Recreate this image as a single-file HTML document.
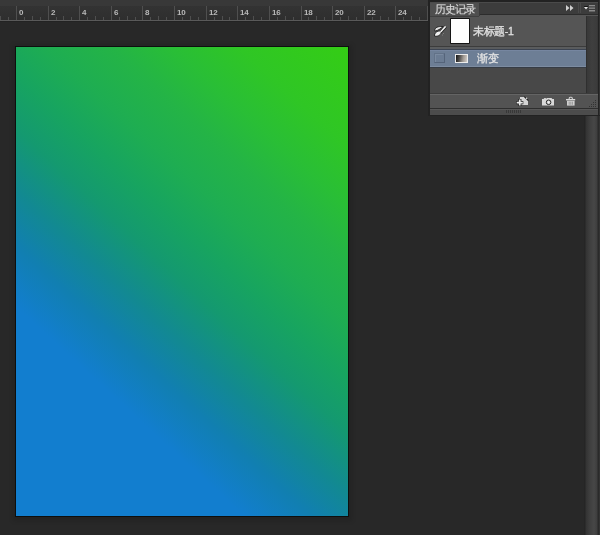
<!DOCTYPE html>
<html><head><meta charset="utf-8">
<style>
*{margin:0;padding:0;box-sizing:border-box}
html,body{width:600px;height:535px;overflow:hidden;background:#282828;font-family:"Liberation Sans",sans-serif}
div,svg{position:absolute}
.r{position:absolute}
.rl{top:9px;font-size:8px;line-height:8px;color:#b9b9b9;font-weight:bold;letter-spacing:-.2px;will-change:transform}
.t{color:#e2e2e2;font-size:10.5px;line-height:12px;white-space:nowrap;letter-spacing:-.4px;will-change:transform;-webkit-text-stroke:.3px #e2e2e2}
</style></head><body>
<!-- top band + ruler -->
<div style="left:0;top:0;width:429px;height:6px;background:#383838"></div>
<div style="left:0;top:6px;width:428px;height:14px;background:linear-gradient(#333,#2e2e2e)"></div>
<div style="left:0;top:20px;width:428px;height:1px;background:#5a5a5a"></div>
<div style="left:0;top:21px;width:428px;height:1px;background:#232323"></div>
<svg style="left:0;top:0" width="430" height="22"><g fill="#4f4f4f">
<rect x="0" y="16" width="1" height="4"/>
<rect x="8" y="17" width="1" height="3"/>
<rect x="16" y="6" width="1" height="14"/>
<rect x="24" y="17" width="1" height="3"/>
<rect x="32" y="16" width="1" height="4"/>
<rect x="40" y="17" width="1" height="3"/>
<rect x="48" y="6" width="1" height="14"/>
<rect x="56" y="17" width="1" height="3"/>
<rect x="63" y="16" width="1" height="4"/>
<rect x="71" y="17" width="1" height="3"/>
<rect x="79" y="6" width="1" height="14"/>
<rect x="87" y="17" width="1" height="3"/>
<rect x="95" y="16" width="1" height="4"/>
<rect x="103" y="17" width="1" height="3"/>
<rect x="111" y="6" width="1" height="14"/>
<rect x="119" y="17" width="1" height="3"/>
<rect x="127" y="16" width="1" height="4"/>
<rect x="135" y="17" width="1" height="3"/>
<rect x="142" y="6" width="1" height="14"/>
<rect x="150" y="17" width="1" height="3"/>
<rect x="158" y="16" width="1" height="4"/>
<rect x="166" y="17" width="1" height="3"/>
<rect x="174" y="6" width="1" height="14"/>
<rect x="182" y="17" width="1" height="3"/>
<rect x="190" y="16" width="1" height="4"/>
<rect x="198" y="17" width="1" height="3"/>
<rect x="206" y="6" width="1" height="14"/>
<rect x="214" y="17" width="1" height="3"/>
<rect x="222" y="16" width="1" height="4"/>
<rect x="229" y="17" width="1" height="3"/>
<rect x="237" y="6" width="1" height="14"/>
<rect x="245" y="17" width="1" height="3"/>
<rect x="253" y="16" width="1" height="4"/>
<rect x="261" y="17" width="1" height="3"/>
<rect x="269" y="6" width="1" height="14"/>
<rect x="277" y="17" width="1" height="3"/>
<rect x="285" y="16" width="1" height="4"/>
<rect x="293" y="17" width="1" height="3"/>
<rect x="301" y="6" width="1" height="14"/>
<rect x="308" y="17" width="1" height="3"/>
<rect x="316" y="16" width="1" height="4"/>
<rect x="324" y="17" width="1" height="3"/>
<rect x="332" y="6" width="1" height="14"/>
<rect x="340" y="17" width="1" height="3"/>
<rect x="348" y="16" width="1" height="4"/>
<rect x="356" y="17" width="1" height="3"/>
<rect x="364" y="6" width="1" height="14"/>
<rect x="372" y="17" width="1" height="3"/>
<rect x="380" y="16" width="1" height="4"/>
<rect x="388" y="17" width="1" height="3"/>
<rect x="395" y="6" width="1" height="14"/>
<rect x="403" y="17" width="1" height="3"/>
<rect x="411" y="16" width="1" height="4"/>
<rect x="419" y="17" width="1" height="3"/>
<rect x="427" y="6" width="1" height="14"/>
</g></svg>
<div class="rl" style="left:19px">0</div>
<div class="rl" style="left:51px">2</div>
<div class="rl" style="left:82px">4</div>
<div class="rl" style="left:114px">6</div>
<div class="rl" style="left:145px">8</div>
<div class="rl" style="left:177px">10</div>
<div class="rl" style="left:209px">12</div>
<div class="rl" style="left:240px">14</div>
<div class="rl" style="left:272px">16</div>
<div class="rl" style="left:304px">18</div>
<div class="rl" style="left:335px">20</div>
<div class="rl" style="left:367px">22</div>
<div class="rl" style="left:398px">24</div>
<div class="rl" style="left:430px">26</div>
<!-- canvas -->
<div style="left:13px;top:45px;width:339px;height:476px;background:rgba(0,0,0,.12);filter:blur(2px)"></div>
<div style="left:15px;top:46px;width:334px;height:471px;background:#0d0f0e"></div>
<div style="left:16px;top:47px;width:332px;height:469px;background:linear-gradient(42.5deg, #127ecf 0%, #127ecf 27%, #117fb1 35%, #128992 42%, #149970 50%, #17a460 57%, #1ead52 64%, #24b446 72%, #29be36 79%, #2fc625 87%, #34cd15 100%)"></div>
<!-- right strip -->
<div style="left:584px;top:115px;width:16px;height:420px;background:linear-gradient(90deg,#252525 0,#252525 1px,#333 2px,#3f3f3f 6px,#474747 10px,#3e3e3e 13px,#2a2a2a 14px,#2a2a2a 15px,#333 15px)"></div>
<!-- panel -->
<div style="left:428px;top:0;width:172px;height:116px;background:#222"></div>
<div style="left:430px;top:2px;width:168px;height:1px;background:#4a4a4a"></div>
<div style="left:430px;top:3px;width:49px;height:13px;background:#4f4f4f"></div>
<div style="left:479px;top:3px;width:1px;height:13px;background:#3a3a3a"></div>
<div style="left:480px;top:3px;width:118px;height:11px;background:#3c3c3c"></div>
<div style="left:480px;top:14px;width:118px;height:1px;background:#2c2c2c"></div>
<div style="left:480px;top:15px;width:118px;height:1px;background:#555"></div>
<div class="t" style="left:435px;top:3px;color:#dadada;letter-spacing:-.9px;-webkit-text-stroke:.15px #dadada">历史记录</div>
<!-- header icons -->
<svg style="left:560px;top:0" width="40" height="16">
 <path d="M6 5 L9.5 8 L6 11 Z M10 5 L13.5 8 L10 11 Z" fill="#cfcfcf"/>
 <rect x="18" y="3" width="1" height="10" fill="#4a4a4a"/><rect x="20" y="3" width="1" height="10" fill="#4a4a4a"/>
 <rect x="24" y="6" width="4" height="1" fill="#151515"/>
 <path d="M24 7 L28 7 L26 9.5 Z" fill="#e6e6e6"/>
 <rect x="29" y="5" width="6" height="1.3" fill="#8a8a8a"/><rect x="29" y="7.5" width="6" height="1.3" fill="#8a8a8a"/><rect x="29" y="10" width="6" height="1.5" fill="#8a8a8a"/>
</svg>
<!-- row 1 -->
<div style="left:430px;top:16px;width:156px;height:30px;background:#555"></div>
<div style="left:430px;top:16px;width:49px;height:1px;background:#404040"></div>
<svg style="left:432px;top:24px" width="16" height="14">
 <path d="M13.6 2.4 L8.6 8" stroke="#1a1a1a" stroke-width="3" fill="none"/>
 <path d="M2.6 12.2 C2 8.8 5 6.8 9.6 6.8 C9.4 10.6 6.4 12.8 2.6 12.2 Z" fill="#efefef" stroke="#181818" stroke-width=".9"/>
 <path d="M13.6 2.4 L8.8 7.8" stroke="#f0f0f0" stroke-width="1.6" fill="none"/>
 <path d="M2.8 7.2 C2.2 4.2 5 2.6 8.6 2.5 L11 2.7 C9.6 3.8 7.2 6.2 2.8 7.2 Z" fill="#e4e4e4" stroke="#181818" stroke-width=".9"/>
 <circle cx="11.5" cy="9.5" r=".5" fill="#888"/><circle cx="10.5" cy="11" r=".5" fill="#888"/>
</svg>
<div style="left:450px;top:18px;width:20px;height:26px;background:#141414;border-radius:1px"></div>
<div style="left:451px;top:19px;width:18px;height:24px;background:#fdfdfd"></div>
<div class="t" style="left:473px;top:25px">未标题-1</div>
<div style="left:430px;top:46px;width:156px;height:1px;background:#3c3c3c"></div>
<div style="left:430px;top:47px;width:156px;height:2px;background:#5a5c5e"></div>
<div style="left:430px;top:49px;width:156px;height:1px;background:#3c4452"></div>
<!-- row 2 -->
<div style="left:430px;top:50px;width:156px;height:17px;background:#6d7e95;border-top:1px solid #7686a0;border-bottom:1px solid #7d8ca1"></div>
<div style="left:434px;top:53px;width:11px;height:10px;background:#6b7c93;border-top:1px solid #627288;border-left:1px solid #627288;border-right:1px solid #55647a;border-bottom:1px solid #55647a"></div>
<div style="left:435px;top:54px;width:8px;height:8px;border-top:1px solid #7a8aa0;border-left:1px solid #7a8aa0"></div>
<div style="left:455px;top:54px;width:13px;height:9px;background:#ececec"></div>
<div style="left:456px;top:55px;width:11px;height:7px;background:linear-gradient(100deg,#141414 0%,#4a4846 30%,#a09a94 65%,#d4cec8 100%)"></div>
<div class="t" style="left:477px;top:52px">渐变</div>
<div style="left:430px;top:67px;width:156px;height:1px;background:#363c45"></div>
<div style="left:430px;top:68px;width:156px;height:25px;background:#484848"></div>
<!-- scrollbar -->
<div style="left:586px;top:16px;width:12px;height:77px;background:linear-gradient(90deg,#2f2f2f 0,#2f2f2f 1px,#383838 1px,#3f3f3f 6px,#3b3b3b 11px,#333 12px)"></div>
<div style="left:599px;top:0;width:1px;height:115px;background:#333"></div>
<!-- footer -->
<div style="left:430px;top:93px;width:168px;height:1px;background:#3c3c3c"></div>
<div style="left:430px;top:94px;width:168px;height:1px;background:#646464"></div>
<div style="left:430px;top:95px;width:168px;height:13px;background:#535353"></div>
<div style="left:430px;top:108px;width:168px;height:1px;background:#2e2e2e"></div>
<div style="left:430px;top:109px;width:168px;height:1px;background:#575757"></div>
<div style="left:430px;top:110px;width:168px;height:5px;background:#4c4c4c"></div>
<div style="left:506px;top:110px;width:16px;height:3px;background:repeating-linear-gradient(90deg,#383838 0 1px,#4c4c4c 1px 2px)"></div>
<svg style="left:514px;top:94px" width="66" height="14">
 <!-- new doc -->
 <path d="M6 3 H10.5 L14 6.5 V11 H6 Z" fill="#d4d4d4"/>
 <path d="M10.3 2.6 L14.4 6.7" stroke="#1e1e1e" stroke-width="1.1"/>
 <circle cx="12.6" cy="4.3" r=".75" fill="#e0e0e0"/>
 <path d="M2.2 8.65 H9.3 M5.75 5 V12" stroke="#1e1e1e" stroke-width="3.3"/>
 <path d="M2.7 8.65 H8.8 M5.75 5.5 V11.5" stroke="#eaeaea" stroke-width="1.8"/>
 <!-- camera -->
 <path d="M28 5 H29.5 L30.5 4 H31.5 L32.2 4.8 L33 4 H37.5 L38.3 5 H40 V11.6 H28 Z" fill="#d8d8d8"/>
 <circle cx="34.6" cy="8.3" r="2.3" fill="#cfcfcf" stroke="#2a2a2a" stroke-width="1"/>
 <circle cx="34.6" cy="8.3" r="1" fill="#f2f2f2"/>
 <!-- trash -->
 <path d="M55.2 5 V4.2 Q55.2 3.2 56.2 3.2 H57.3 Q58.3 3.2 58.3 4.2 V5" stroke="#d0d0d0" stroke-width="1.1" fill="none"/>
 <rect x="52" y="5" width="9.2" height="1.4" fill="#d8d8d8"/>
 <rect x="53" y="6.8" width="7.6" height="4.8" fill="#d0d0d0"/>
 <path d="M55.2 7.6 V10.8 M56.8 7.6 V10.8 M58.4 7.6 V10.8" stroke="#8c8c8c" stroke-width=".8"/>
</svg>
<!-- resize grip -->
<svg style="left:586px;top:98px" width="12" height="10">
 <g fill="#333"><rect x="9" y="2" width="1" height="1"/><rect x="7" y="4" width="1" height="1"/><rect x="9" y="4" width="1" height="1"/><rect x="5" y="6" width="1" height="1"/><rect x="7" y="6" width="1" height="1"/><rect x="9" y="6" width="1" height="1"/><rect x="3" y="8" width="1" height="1"/><rect x="5" y="8" width="1" height="1"/><rect x="7" y="8" width="1" height="1"/><rect x="9" y="8" width="1" height="1"/></g>
</svg>
</body></html>
